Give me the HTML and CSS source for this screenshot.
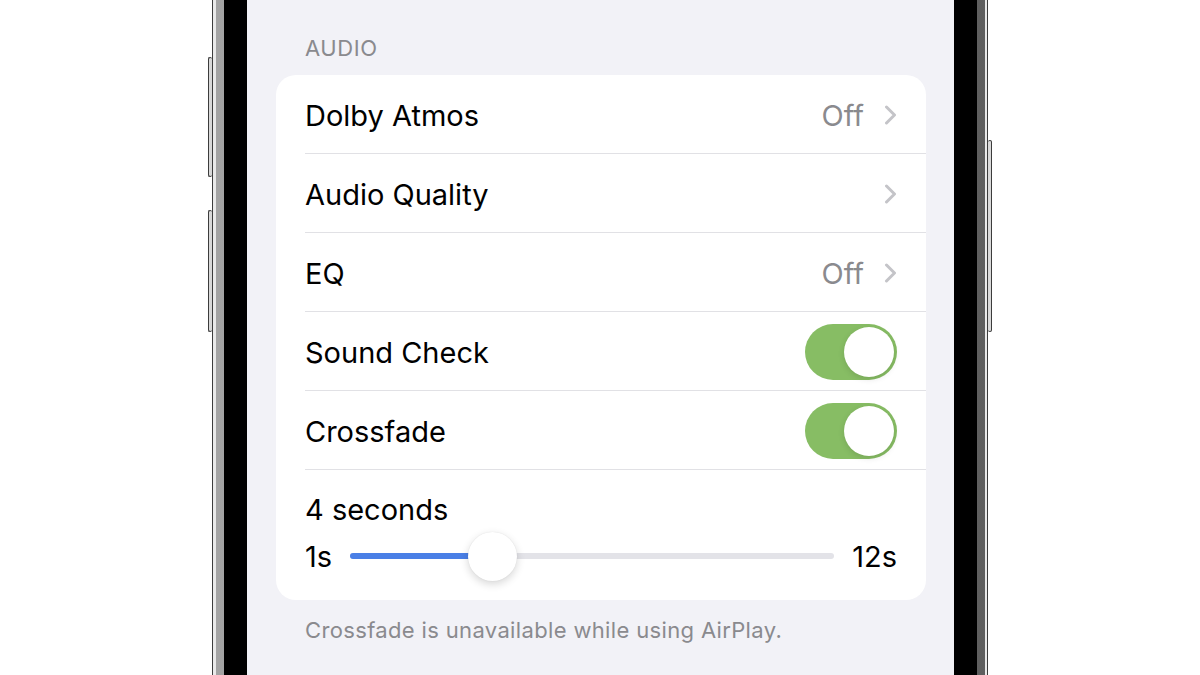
FILE: index.html
```html
<!DOCTYPE html>
<html lang="en">
<head>
    <meta charset="UTF-8">
    <meta name="viewport" content="width=device-width, initial-scale=1.0">
    <title>Music Settings - Audio</title>
    <link rel="stylesheet" href="styles.css">
</head>
<body>
    <div class="stage">
        <div class="phone">
            <span class="side-btn btn-vol-up"></span>
            <span class="side-btn btn-vol-down"></span>
            <span class="side-btn btn-power"></span>
            <div class="band">
                <div class="bezel">
                    <div class="screen">
                        <div class="section-title">AUDIO</div>
                        <div class="card">
                            <div class="row">
                                <span class="label">Dolby Atmos</span>
                                <span class="detail">Off</span>
                                <svg class="chevron" width="13" height="20" viewBox="0 0 13 20"><polyline points="2.5,2 10.5,10 2.5,18" /></svg>
                            </div>
                            <div class="row">
                                <span class="label">Audio Quality</span>
                                <svg class="chevron" width="13" height="20" viewBox="0 0 13 20"><polyline points="2.5,2 10.5,10 2.5,18" /></svg>
                            </div>
                            <div class="row">
                                <span class="label">EQ</span>
                                <span class="detail">Off</span>
                                <svg class="chevron" width="13" height="20" viewBox="0 0 13 20"><polyline points="2.5,2 10.5,10 2.5,18" /></svg>
                            </div>
                            <div class="row">
                                <span class="label">Sound Check</span>
                                <span class="toggle on"><span class="toggle-knob"></span></span>
                            </div>
                            <div class="row">
                                <span class="label">Crossfade</span>
                                <span class="toggle on"><span class="toggle-knob"></span></span>
                            </div>
                            <div class="slider-row">
                                <div class="slider-value">4 seconds</div>
                                <div class="slider-line">
                                    <span class="slider-end">1s</span>
                                    <div class="track">
                                        <div class="track-fill" style="width: 29.4%"></div>
                                        <span class="thumb" style="left: 29.4%"></span>
                                    </div>
                                    <span class="slider-end">12s</span>
                                </div>
                            </div>
                        </div>
                        <div class="section-footer">Crossfade is unavailable while using AirPlay.</div>
                    </div>
                </div>
            </div>
        </div>
    </div>
</body>
</html>
```

FILE: styles.css
```css
/* Base */
body {
    margin: 0;
    background-color: #ffffff;
    font-family: Inter, "Noto Sans", sans-serif;
}
.stage {
    height: 675px;
    overflow: hidden;
    display: flex;
    justify-content: center;
}

/* Phone frame */
.phone {
    position: relative;
    width: 776px;
    height: 675px;
    box-sizing: border-box;
    border-left: 1px solid #3c3c3c;
    border-right: 1px solid #3c3c3c;
    padding: 0 2px 0 3px;
    background-color: #e9e9e9;
}
.band {
    height: 100%;
    padding: 0 8px 0 8px;
    background: linear-gradient(90deg, #a3a3a3 0%, #8a8a8a 60%, #5e5e5e 100%);
}
.bezel {
    height: 100%;
    padding: 0 23px;
    background-color: #000;
}
.screen {
    height: 100%;
    box-sizing: border-box;
    padding: 35px 28px 0 29px;
    background-color: #f2f2f7;
}
.side-btn {
    position: absolute;
    width: 3px;
    background-color: #d9d9d9;
    border: 1px solid #3c3c3c;
    border-radius: 2px;
}
.btn-vol-up {
    left: -5px;
    top: 57px;
    height: 118px;
    border-right: none;
}
.btn-vol-down {
    left: -5px;
    top: 210px;
    height: 120px;
    border-right: none;
}
.btn-power {
    right: -5px;
    top: 140px;
    height: 190px;
    border-left: none;
}

/* Settings list */
.section-title {
    font-size: 22px;
    line-height: 26px;
    letter-spacing: 0.6px;
    color: #8a8a8e;
    padding-left: 29px;
    margin-bottom: 14px;
}
.card {
    background-color: #fff;
    border-radius: 20px;
    overflow: hidden;
}
.row {
    display: flex;
    align-items: center;
    height: 79px;
    box-sizing: border-box;
    margin-left: 29px;
    padding-right: 29px;
    padding-top: 2px;
    border-bottom: 1px solid #e1e1e5;
}
.label {
    flex: 1;
    font-size: 29px;
    color: #000;
}
.detail {
    font-size: 29px;
    color: #8a8a8e;
    margin-right: 20px;
}
.chevron {
    fill: none;
    stroke: #c4c4c8;
    stroke-width: 3;
    stroke-linecap: round;
    stroke-linejoin: round;
}
.toggle {
    width: 92px;
    height: 56px;
    box-sizing: border-box;
    padding: 3px;
    border-radius: 28px;
    background-color: #e5e5ea;
    display: flex;
}
.toggle.on {
    background-color: #87bd64;
    justify-content: flex-end;
}
.toggle-knob {
    width: 50px;
    height: 50px;
    border-radius: 50%;
    background-color: #fff;
    box-shadow: 0 2px 6px rgba(0, 0, 0, 0.12);
}

/* Crossfade slider */
.slider-row {
    padding: 23px 29px 19px 29px;
}
.slider-value {
    font-size: 29px;
    line-height: 34px;
}
.slider-line {
    display: flex;
    align-items: center;
    height: 50px;
    margin-top: 4px;
}
.slider-end {
    font-size: 29px;
}
.track {
    position: relative;
    flex: 1;
    height: 6px;
    margin: 0 18px;
    border-radius: 3px;
    background-color: #e3e3e8;
}
.track-fill {
    height: 100%;
    border-radius: 3px;
    background-color: #4a7fe6;
}
.thumb {
    position: absolute;
    top: -21px;
    width: 49px;
    height: 49px;
    margin-left: -24px;
    border-radius: 50%;
    background-color: #fff;
    box-shadow: 0 3px 9px rgba(0, 0, 0, 0.16), 0 0 1px rgba(0, 0, 0, 0.12);
}
.section-footer {
    font-size: 22px;
    line-height: 26px;
    letter-spacing: 0.35px;
    color: #8a8a8e;
    padding-left: 29px;
    margin-top: 17px;
}
```
